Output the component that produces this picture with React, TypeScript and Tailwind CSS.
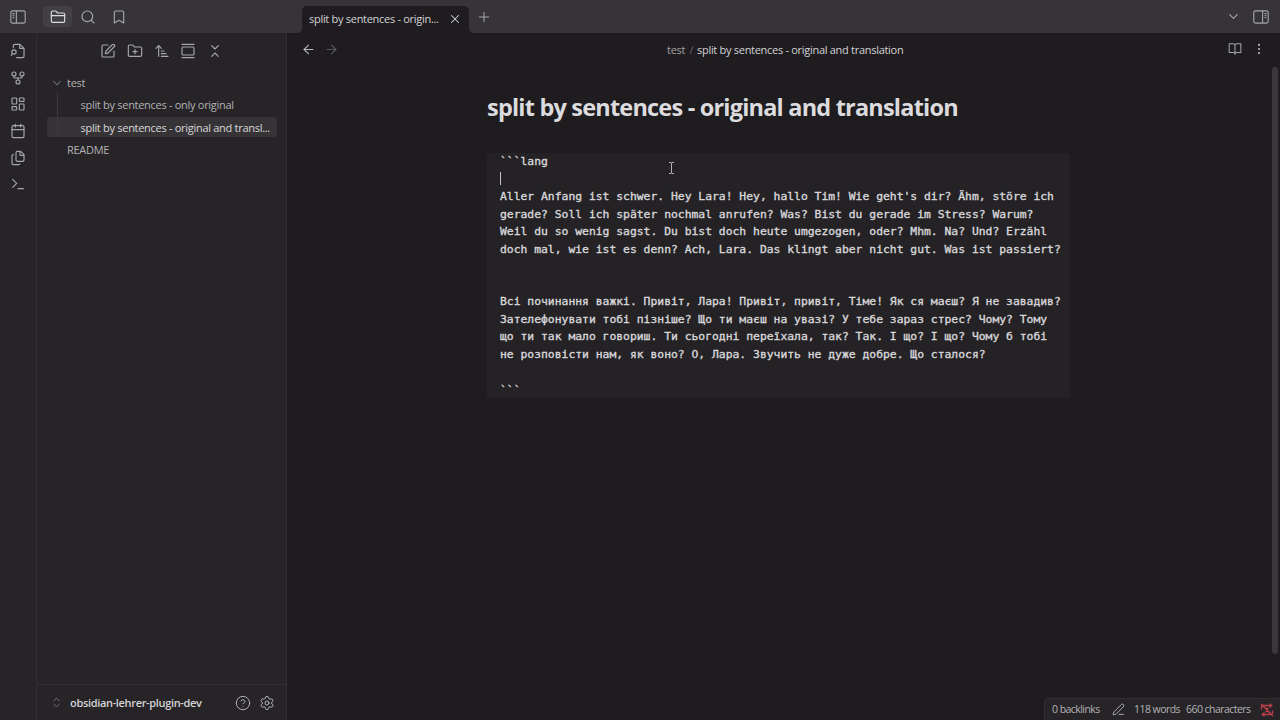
import React from "react";
import {
  ArrowLeft, ArrowRight, ArrowUpNarrowWide, Bookmark, Calendar, ChevronDown, ChevronsUpDown,
  CircleHelp, EllipsisVertical, Files, FolderClosed, FolderPlus, GalleryVertical, GitFork, LayoutDashboard,
  PenLine, Plus, Search, Settings, SquarePen, Terminal, X,
} from "lucide-react";

const german = [
  "Aller Anfang ist schwer. Hey Lara! Hey, hallo Tim! Wie geht's dir? Ähm, störe ich",
  "gerade? Soll ich später nochmal anrufen? Was? Bist du gerade im Stress? Warum?",
  "Weil du so wenig sagst. Du bist doch heute umgezogen, oder? Mhm. Na? Und? Erzähl",
  "doch mal, wie ist es denn? Ach, Lara. Das klingt aber nicht gut. Was ist passiert?",
];

const ukrainian = [
  "Всі починання важкі. Привіт, Лара! Привіт, привіт, Тіме! Як ся маєш? Я не завадив?",
  "Зателефонувати тобі пізніше? Що ти маєш на увазі? У тебе зараз стрес? Чому? Тому",
  "що ти так мало говориш. Ти сьогодні переїхала, так? Так. І що? І що? Чому б тобі",
  "не розповісти нам, як воно? О, Лара. Звучить не дуже добре. Що сталося?",
];

function SidebarIcon({ flip = false }: { flip?: boolean }) {
  return (
    <svg width="16" height="14" viewBox="0 0 16 14" fill="none" stroke="currentColor" strokeWidth="1.1" className={flip ? "-scale-x-100" : ""}>
      <rect x="0.8" y="0.9" width="14.4" height="12.2" rx="1.6" />
      <path d="M6.4 1v12M2.5 3.6h2M2.5 5.7h2M2.5 7.8h2" />
    </svg>
  );
}

function FileSearchIcon() {
  return (
    <svg width="16" height="16" viewBox="0 0 24 24" fill="none" stroke="currentColor" strokeWidth="1.75" strokeLinecap="round" strokeLinejoin="round">
      <path d="M5 7V4a2 2 0 0 1 2-2h8l6 6v12a2 2 0 0 1-2 2H10" />
      <path d="M14.500 2v6H21" />
      <circle cx="6" cy="13.500" r="3.200" />
      <path d="m3.700 16-1.700 2.500" />
    </svg>
  );
}

function BookIcon() {
  return (
    <svg width="14" height="14" viewBox="0 0 24 24" fill="none" stroke="currentColor" strokeWidth="1.75" strokeLinecap="round" strokeLinejoin="round" className="ml-px text-[#a6a5a8]">
      <path d="M2 3h7a3 3 0 0 1 3 3v15a3 3 0 0 0-3-3H2zM22 3h-7a3 3 0 0 0-3 3v15a3 3 0 0 1 3-3h7z" />
    </svg>
  );
}

function CollapseIcon() {
  return (
    <svg width="16" height="16" viewBox="0 0 24 24" fill="none" stroke="currentColor" strokeWidth="1.75" strokeLinecap="round" strokeLinejoin="round">
      <path d="m7 20 5-5 5 5M7 4l5 5 5-5" />
    </svg>
  );
}

function SyncOffIcon() {
  return (
    <svg width="14" height="14" viewBox="0 0 14 14" fill="none" stroke="#b83f47" strokeWidth="1.3">
      <path d="M1.500 6.500V4Q1.500 2.500 3 2.500h8M9.500.800 11.800 2.500 9.500 4.500M12.500 7.500V10q0 1.500-1.500 1.500H3M4.500 9.500 2.200 11.500l2.300 1.700M1 1l12 12M6 5.500h2.500M5.500 8.500H8" />
    </svg>
  );
}

function TextLine({ children }: { children: React.ReactNode }) {
  return <div className="h-[17.5px] whitespace-pre leading-[17.5px]">{children}</div>;
}

export default function App() {
  return (
    <div className="flex h-[720px] w-[1280px] flex-col overflow-hidden bg-[#1e1c1f] font-['Open_Sans','Noto_Sans',sans-serif] text-[11px] tracking-[-0.29px] text-[#b3b2b5]">
      <header className="flex h-[33px] shrink-0 bg-[#363437] text-[#a6a5a8]">
        <div className="flex w-[302px] shrink-0 items-center pl-[10px]">
          <SidebarIcon />
          <div className="ml-[17px] flex h-[21px] w-[29px] items-center justify-center rounded bg-[#424043] text-[#dcdbde]">
            <FolderClosed size={16} strokeWidth={1.75} />
          </div>
          <Search size={16} strokeWidth={1.75} className="ml-2" />
          <Bookmark size={16} strokeWidth={1.75} className="ml-[15px]" />
        </div>
        <div className="relative mt-[6px] flex w-[167px] shrink-0 items-center rounded-t-[5px] bg-[#1e1c1f] pb-[2px] pl-[7px] text-[#d4d3d6]">
          <span className="w-[131px] pt-[2px] whitespace-nowrap">split by sentences - origin...</span>
          <X size={14} strokeWidth={1.75} className="ml-[8px]" />
          <span className="absolute bottom-0 -left-[5px] size-[5px] bg-[radial-gradient(circle_at_top_left,#363437_5px,#1e1c1f_5px)]" />
          <span className="absolute -right-[5px] bottom-0 size-[5px] bg-[radial-gradient(circle_at_top_right,#363437_5px,#1e1c1f_5px)]" />
        </div>
        <div className="flex grow items-center pr-[11px] pl-[7px]">
          <Plus size={16} strokeWidth={1.5} />
          <ChevronDown size={15} strokeWidth={1.75} className="ml-auto" />
          <div className="ml-[12px]"><SidebarIcon flip /></div>
        </div>
      </header>

      <div className="flex min-h-0 grow">
        <nav className="flex w-[37px] shrink-0 flex-col items-center gap-[10.66px] border-r border-[#302e31] bg-[#262427] pt-[10px] text-[#a6a5a8]">
          <FileSearchIcon />
          <GitFork size={16} strokeWidth={1.75} />
          <LayoutDashboard size={16} strokeWidth={1.75} />
          <Calendar size={16} strokeWidth={1.75} />
          <Files size={16} strokeWidth={1.75} />
          <Terminal size={16} strokeWidth={1.75} />
        </nav>

        <aside className="flex w-[250px] shrink-0 flex-col border-r border-[#302e31] bg-[#262427]">
          <div className="flex h-[36px] items-center justify-center gap-[10.66px] text-[#a6a5a8]">
            <SquarePen size={16} strokeWidth={1.75} />
            <FolderPlus size={16} strokeWidth={1.75} />
            <ArrowUpNarrowWide size={16} strokeWidth={1.75} />
            <GalleryVertical size={16} strokeWidth={1.75} />
            <CollapseIcon />
          </div>
          <div className="mt-[3px] flex flex-col pr-[9px] pl-[10px]">
            <div className="flex h-[21px] items-center">
              <ChevronDown size={14} strokeWidth={1.75} className="ml-[3px] text-[#77767a]" />
              <span className="ml-[3px] pt-[2px]">test</span>
            </div>
            <div className="relative flex flex-col gap-[2px] pt-px">
              <div className="flex h-[21px] items-center pt-[2px] pl-[33.5px] whitespace-nowrap">split by sentences - only original</div>
              <div className="flex h-[20px] items-center rounded-[3px] bg-[#353336] pt-[2px] pl-[33.5px] whitespace-nowrap text-[#d8d7da]">split by sentences - original and transl...</div>
              <span className="absolute top-0 bottom-0 left-[10px] w-px bg-[#3b393c]" />
            </div>
            <div className="mt-[2px] flex h-[21px] items-center pt-[2px] pl-[20px]">README</div>
          </div>
          <div className="mt-auto flex h-[36px] items-center border-t border-[#302e31]">
            <ChevronsUpDown size={13} strokeWidth={1.75} className="ml-[13px] text-[#77767a]" />
            <span className="ml-[7px] w-[165px] pt-[2px] whitespace-nowrap font-semibold tracking-[-0.33px] text-[#d4d3d6]">obsidian-lehrer-plugin-dev</span>
            <CircleHelp size={16} strokeWidth={1.5} />
            <Settings size={16} strokeWidth={1.5} className="ml-[8px]" />
          </div>
        </aside>

        <main className="flex min-w-0 grow flex-col">
          <div className="flex h-[33px] shrink-0 items-center pb-px pl-[14px]">
            <ArrowLeft size={15} strokeWidth={1.75} />
            <ArrowRight size={15} strokeWidth={1.75} className="ml-[8px] text-[#59585b]" />
            <div className="ml-[328px] flex w-[560px] items-center pt-[2px] whitespace-pre">
              <span className="w-[22.5px] text-[#a2a1a4]">test</span>
              <span className="w-[7.5px] text-[#69686b]">/</span>
              <span className="text-[#d4d3d6]">split by sentences - original and translation</span>
            </div>
            <BookIcon />
            <EllipsisVertical size={14} strokeWidth={1.75} className="ml-[10px]" />
          </div>
          <div className="flex min-h-0 grow justify-between">
            <div className="ml-[200px] w-[583px] pt-[23px]">
              <h1 className="h-[37px] whitespace-nowrap text-[23.5px] leading-[36px] font-bold tracking-[-0.8px] text-[#dcdbde]">split by sentences - original and translation</h1>
              <section className="mt-[27px] h-[245px] rounded-[3px] bg-[#242225] pl-[13px] font-['DejaVu_Sans_Mono',monospace] text-[11.36px] tracking-normal text-[#d8d7da] [-webkit-text-stroke:0.35px_#d8d7da]">
                <TextLine>```lang</TextLine>
                <div className="flex h-[17.6px] items-center pb-px"><span className="h-[13px] w-px bg-[#c4c3c6]" /></div>
                {german.map((line) => <TextLine key={line}>{line}</TextLine>)}
                <div className="h-[35px]" />
                {ukrainian.map((line) => <TextLine key={line}>{line}</TextLine>)}
                <div className="h-[19px]" />
                <TextLine>```</TextLine>
              </section>
            </div>
            <div className="mt-px mr-[2px] h-[587px] w-[6px] rounded-full bg-[#39373a]" />
          </div>
          <footer className="flex h-[22px] w-[236px] shrink-0 items-center self-end rounded-tl-[5px] border-t border-l border-[#302e31] bg-[#262427] pl-[7px] text-[10.5px] tracking-[-0.55px] whitespace-nowrap">
            <span className="w-[60px]">0 backlinks</span>
            <PenLine size={13} strokeWidth={1.75} />
            <span className="ml-[9px] w-[52px]">118 words</span>
            <span className="w-[74px]">660 characters</span>
            <SyncOffIcon />
          </footer>
        </main>
      </div>

      <svg width="7" height="12" viewBox="0 0 7 12" fill="none" stroke="#b0afb2" className="absolute top-[162px] left-[668px]">
        <path d="M1 .5h2l.5.5.5-.5h2M3.5 1v10M1 11.500h2l.5-.5.5.5h2" />
      </svg>
    </div>
  );
}
